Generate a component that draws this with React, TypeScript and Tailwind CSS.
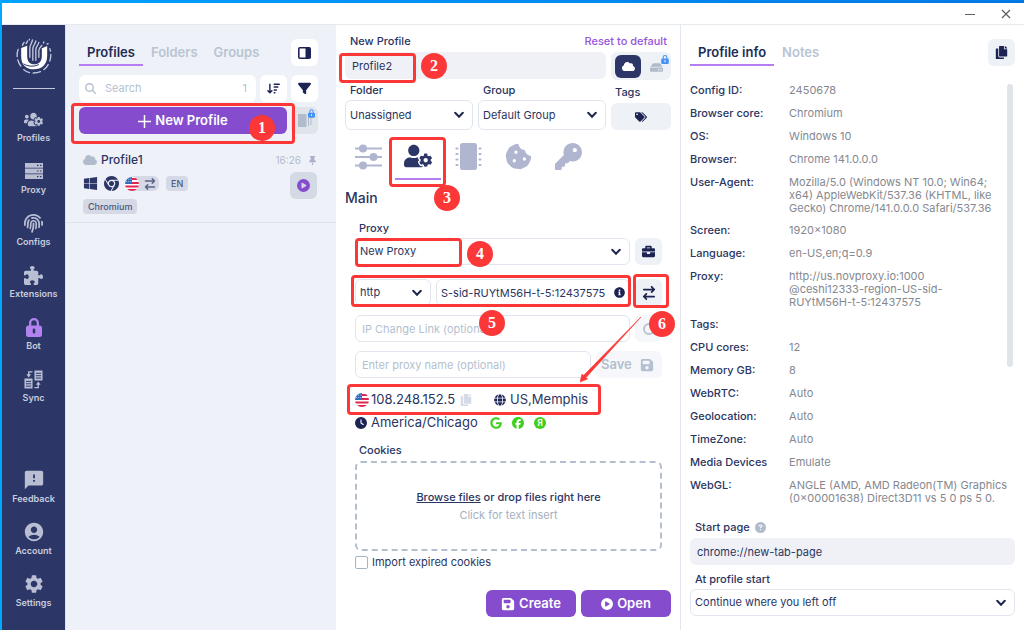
import { useState } from "react";
import type { ReactNode } from "react";
import { FaBriefcase, FaCopy, FaGlobe, FaHdd, FaInfoCircle, FaTags, FaUserCog, FaUsersCog } from "react-icons/fa";
import {
  FaArrowDownWideShort,
  FaArrowRightArrowLeft,
  FaChrome,
  FaCirclePlay,
  FaCircleQuestion,
  FaClock,
  FaCloud,
  FaCookieBite,
  FaFacebook,
  FaFilter,
  FaFingerprint,
  FaFloppyDisk,
  FaGoogle,
  FaKey,
  FaMagnifyingGlass,
  FaPuzzlePiece,
  FaThumbtack,
  FaWindows,
} from "react-icons/fa6";
import { MdAccountCircle, MdFeedback, MdSettings } from "react-icons/md";

const PROFILE_INFO = [
  ["Config ID:", "2450678"],
  ["Browser core:", "Chromium"],
  ["OS:", "Windows 10"],
  ["Browser:", "Chrome 141.0.0.0"],
  ["User-Agent:", "Mozilla/5.0 (Windows NT 10.0; Win64;\nx64) AppleWebKit/537.36 (KHTML, like\nGecko) Chrome/141.0.0.0 Safari/537.36"],
  ["Screen:", "1920×1080"],
  ["Language:", "en-US,en;q=0.9"],
  ["Proxy:", "http://us.novproxy.io:1000\n@ceshi12333-region-US-sid-\nRUYtM56H-t-5:12437575"],
  ["Tags:", ""],
  ["CPU cores:", "12"],
  ["Memory GB:", "8"],
  ["WebRTC:", "Auto"],
  ["Geolocation:", "Auto"],
  ["TimeZone:", "Auto"],
  ["Media Devices", "Emulate"],
  ["WebGL:", "ANGLE (AMD, AMD Radeon(TM) Graphics\n(0×00001638) Direct3D11 vs 5 0 ps 5 0."],
];

function Logo() {
  return (
    <svg viewBox="0 0 105 108" className="h-9 w-9" fill="none" stroke="#fff" strokeLinecap="round" aria-hidden="true">
      <path d="M14 30v24c0 27 15 40 38 40s40-14 40-40V24L76 31v23c0 16-8 25-23 25-14 0-21-9-21-25V23Z" fill="#fff" stroke="none" />
      <path d="M22 78c12 8 30 9 44 2" stroke="#2c3768" strokeWidth="3" />
      <g stroke="#c3c8dc" strokeWidth="4">
        <path d="M40 58V30c0-9 6-14 8-24M49 67V33c0-10 7-14 9-24M58 67V35c0-9 7-13 9-22M67 58V38c0-8 6-11 9-16" />
        <path d="M29 17c2-3 3-5 4-8M38 6l1-2M18 22c1-4 3-6 5-9M82 12l-1 3M92 18l3-1" />
        <path d="M5 34c-3 8-4 14-3 22M4 66c2 7 5 13 9 18M22 95c5 4 11 7 17 9M50 105c8 0 15-1 22-4M82 95c6-4 10-9 13-15M100 69c2-6 3-12 3-20M102 39l-2-7" />
      </g>
    </svg>
  );
}

function PadlockIcon({ className }: { className: string }) {
  return (
    <svg viewBox="0 0 16 19" className={className} fill="currentColor" aria-hidden="true">
      <path fillRule="evenodd" d="M3 7.500V5a5 5 0 0 1 10 0v2.500h.5A2.500 2.500 0 0 1 16 10v6.500A2.500 2.500 0 0 1 13.500 19h-11A2.500 2.500 0 0 1 0 16.500V10a2.500 2.500 0 0 1 2.500-2.500ZM5.300 7.500h5.400V5a2.700 2.700 0 0 0-5.400 0ZM8 10.500a1.300 1.300 0 0 0-1.300 1.300v2.400a1.300 1.300 0 0 0 2.600 0v-2.400A1.300 1.300 0 0 0 8 10.500Z" />
    </svg>
  );
}

function RackIcon({ className }: { className: string }) {
  return (
    <svg viewBox="0 0 20 18" className={className} aria-hidden="true">
      <path fill="currentColor" d="M1 1h18v4.800H1zM1 6.600h18v4.800H1zM1 12.200h18V17H1z" />
      <path stroke="#2c3768" strokeWidth="1.200" d="M13 3.400h1.500M16 3.400h1.500M13 9h1.500M16 9h1.500M13 14.600h1.500M16 14.600h1.500" />
    </svg>
  );
}

function SyncIcon({ className }: { className: string }) {
  return (
    <svg viewBox="0 0 20 20" className={className} aria-hidden="true">
      <path fill="currentColor" d="M11 .5h8.500V11H11zM.5 9H9v10.500H.5z" />
      <path stroke="#2c3768" strokeWidth="1" d="M12.500 3.500H18M12.500 6H18M12.500 8.500H18M2 12h5.500M2 14.500h5.500M2 17h5.500" />
      <path fill="none" stroke="currentColor" strokeWidth="1.400" d="M9 2H5v4M11 18.500h4V14" />
      <path fill="currentColor" d="M2.500 4.500h5L5 8zM12.500 15.500h5L15 12z" />
    </svg>
  );
}

function SlidersIcon() {
  return (
    <svg viewBox="0 0 27 27" className="size-[27px]" fill="currentColor" aria-hidden="true">
      <path d="M0 4.500h27v2H0zM0 13h27v2H0zM0 21.500h27v2H0z" />
      <circle cx="8" cy="5.500" r="4" />
      <circle cx="18.500" cy="14" r="4" />
      <circle cx="8" cy="22.500" r="4" />
    </svg>
  );
}

function ChipIcon() {
  return (
    <svg viewBox="0 0 27 27" className="size-[27px]" aria-hidden="true">
      <rect x="5" y="0" width="17" height="27" rx="2.500" fill="currentColor" />
      <path stroke="currentColor" strokeWidth="2.200" strokeLinecap="round" d="M1.500 5.500h1M1.500 11h1M1.500 16.500h1M1.500 22h1M24.500 5.500h1M24.500 11h1M24.500 16.500h1M24.500 22h1" />
    </svg>
  );
}

function FlagIcon() {
  return (
    <svg viewBox="0 0 14 14" className="size-[14px] shrink-0" role="img" aria-label="US">
      <clipPath id="flagClip">
        <circle cx="7" cy="7" r="7" />
      </clipPath>
      <g clipPath="url(#flagClip)">
        <path fill="#fff" d="M0 0h14v14H0z" />
        <path fill="#e0264f" d="M7 1h7v2H7zM7 5h7v2H7zM0 8.500h14v2H0zM0 12h14v2H0z" />
        <path fill="#2f6cc0" d="M0 0h7v7H0z" />
        <path stroke="#cfe0f5" strokeWidth=".8" strokeDasharray="1 1.200" d="M1 2.200h6M1 4.500h6" />
      </g>
    </svg>
  );
}

function YandexIcon() {
  return (
    <svg viewBox="0 0 14 14" className="size-3" aria-hidden="true">
      <circle cx="7" cy="7" r="7" fill="#3fd01f" />
      <text x="7" y="10.500" textAnchor="middle" fontSize="10" fontWeight="600" fontFamily="Inter, sans-serif" fill="#fff">Я</text>
    </svg>
  );
}

function Step({ n, className }: { n: number; className: string }) {
  return (
    <span className={`absolute z-20 flex size-[26px] items-center justify-center rounded-full bg-[#fb3737] font-['Liberation_Serif',serif] text-base leading-none font-bold text-white ${className}`}>
      {n}
    </span>
  );
}

function Frame({ className }: { className: string }) {
  return <span className={`pointer-events-none absolute z-10 rounded-sm border-[3px] border-[#fb3737] ${className}`} />;
}

function Select({ id, label, value, className = "" }: { id: string; label?: string; value: string; className?: string }) {
  return (
    <div className={`relative ${className}`}>
      <select id={id} aria-label={label} className="h-full w-full appearance-none rounded-md border border-[#e1e6ee] bg-white pl-1 text-[11px] text-[#2b355f] outline-none">
        <option>{value}</option>
      </select>
      <svg viewBox="0 0 10 7" className="pointer-events-none absolute top-1/2 right-[9px] h-[7px] w-[10px] -translate-y-1/2" fill="none" stroke="#1d2750" strokeWidth="2" strokeLinecap="round" aria-hidden="true">
        <path d="m1.200 1.200 3.800 4 3.800-4" />
      </svg>
    </div>
  );
}

function NavItem({ icon, label }: { icon: ReactNode; label: string }) {
  return (
    <button className="flex w-full flex-col items-center gap-[3px] text-[#b9bed3]">
      <span className="flex h-5 items-center">{icon}</span>
      <span className="text-[9px] leading-3 font-semibold text-[#c9cddd]">{label}</span>
    </button>
  );
}

function Sidebar() {
  return (
    <nav className="flex w-16 shrink-0 flex-col items-center border-r border-[#dfe3ec] bg-[#2c3768] pt-[13px] pb-[21px]">
      <Logo />
      <hr className="mt-[14px] w-[42px] border-[#c3c8dc]" />
      <div className="mt-5 flex w-full flex-col gap-[17px]">
        <NavItem icon={<FaUsersCog className="size-[19px]" />} label="Profiles" />
        <NavItem icon={<RackIcon className="size-5" />} label="Proxy" />
        <NavItem icon={<FaFingerprint className="size-[19px]" />} label="Configs" />
        <NavItem icon={<FaPuzzlePiece className="size-[19px]" />} label="Extensions" />
        <NavItem icon={<PadlockIcon className="h-[19px] w-4 text-[#b283ee]" />} label="Bot" />
        <NavItem icon={<SyncIcon className="size-[19px]" />} label="Sync" />
      </div>
      <div className="mt-auto flex w-full flex-col gap-[17px]">
        <NavItem icon={<MdFeedback className="size-[22px]" />} label="Feedback" />
        <NavItem icon={<MdAccountCircle className="size-[22px]" />} label="Account" />
        <NavItem icon={<MdSettings className="size-[22px]" />} label="Settings" />
      </div>
    </nav>
  );
}

function ProfileList() {
  const [tab, setTab] = useState("Profiles");
  return (
    <section className="w-[270px] shrink-0 bg-[#eef1f7]">
      <div className="flex flex-col gap-[5px] pr-[18px] pl-[13px]">
        <div className="mt-[14px] mb-1 flex h-[27px] items-center justify-between">
          <div className="flex h-full">
            {["Profiles", "Folders", "Groups"].map((t) => (
              <button
                key={t}
                onClick={() => setTab(t)}
                className={`border-b-2 px-2 pt-[3px] text-[13px] font-semibold ${t === tab ? "border-[#b57ff2] text-[#212b55]" : "border-transparent text-[#b9c4d3]"}`}
              >
                {t}
              </button>
            ))}
          </div>
          <button aria-label="Toggle panel" className="flex size-[27px] items-center justify-center rounded-md bg-white text-[#1d2454]">
            <svg viewBox="0 0 13 12" className="h-3 w-[13px]" aria-hidden="true">
              <rect x=".8" y=".8" width="11.400" height="10.400" rx="1" fill="none" stroke="currentColor" strokeWidth="1.600" />
              <path fill="currentColor" d="M7.500 1H12v10H7.500z" />
            </svg>
          </button>
        </div>
        <div className="flex gap-1">
          <label className="flex h-[27px] min-w-0 flex-1 items-center rounded-md bg-white px-[6px] text-[#b4bfcf]">
            <FaMagnifyingGlass className="size-[11px] shrink-0" />
            <input placeholder="Search" aria-label="Search" className="ml-[9px] min-w-0 flex-1 text-[11px] outline-none placeholder:text-[#b4bfcf]" />
            <span className="pr-[3px] text-[11px]">1</span>
          </label>
          <button aria-label="Sort" className="flex size-[27px] items-center justify-center rounded-md bg-white text-[#1d2454]">
            <FaArrowDownWideShort className="size-[13px]" />
          </button>
          <button aria-label="Filter" className="flex size-[27px] items-center justify-center rounded-md bg-white text-[#1d2454]">
            <FaFilter className="size-[13px]" />
          </button>
        </div>
        <div className="relative flex gap-1">
          <button className="flex h-[27px] flex-1 items-center justify-center gap-1 rounded-md bg-[#854dce] pt-px text-[13px] font-semibold text-white">
            <svg viewBox="0 0 14 14" className="size-[13px]" stroke="currentColor" strokeWidth="1.600" aria-hidden="true">
              <path d="M7 0v14M0 7h14" />
            </svg>
            New Profile
          </button>
          <button aria-label="Multiple profiles" className="relative flex size-[27px] items-center rounded-md bg-[#dfe4eb] pl-[7px] text-[#b0bccb]">
            <svg viewBox="0 0 14 13" className="h-[13px] w-[14px]" fill="currentColor" aria-hidden="true">
              <path d="M0 0h8.500v13H0zM10 1h1v11h-1zM12.500 2h1v9h-1z" />
            </svg>
            <PadlockIcon className="absolute top-[2px] right-[3px] h-[9px] w-[7px] text-[#4593f8]" />
          </button>
          <Frame className="-top-1 -left-2 h-[41px] w-[224px]" />
          <Step n={1} className="top-[8px] left-[170px]" />
        </div>
      </div>

      <article className="border-b border-[#dde2ea] pt-[18px] pr-[19px] pb-2 pl-[17px]">
        <div className="flex h-4 items-center gap-1 text-[#b0bccb]">
          <FaCloud className="size-[14px]" />
          <h2 className="flex-1 text-xs font-medium text-[#2b355f]">Profile1</h2>
          <span className="text-[10px]">16:26</span>
          <FaThumbtack className="ml-[3px] size-[9px] text-[#a9b0c8]" />
        </div>
        <div className="flex h-[31px] items-center text-[#2c3768]">
          <FaWindows className="size-[15px]" />
          <FaChrome className="ml-[6px] size-[15px]" />
          <span className="ml-[6px] flex h-[15px] items-center rounded-md bg-linear-to-r from-transparent from-20% to-[#d5d9e6] to-20% pr-[3px]">
            <FlagIcon />
            <FaArrowRightArrowLeft className="ml-[5px] size-3 text-[#5a6388]" />
          </span>
          <span className="ml-[7px] rounded bg-[#d5d9e6] px-[5px] text-[9px] leading-[15px] font-medium text-[#4c5679]">EN</span>
          <button aria-label="Start profile" className="mt-1 ml-auto flex size-[27px] items-center justify-center rounded-md bg-[#d3d9e5]">
            <FaCirclePlay className="size-[13px] text-[#854dce]" />
          </button>
        </div>
        <span className="block w-fit rounded bg-[#d5d9e6] px-[5px] text-[9px] leading-[15px] font-medium text-[#4c5679]">Chromium</span>
      </article>
    </section>
  );
}

const FORM_TABS = [
  { id: "general", icon: <SlidersIcon /> },
  { id: "account", icon: <FaUserCog className="size-[28px]" /> },
  { id: "hardware", icon: <ChipIcon /> },
  { id: "cookies", icon: <FaCookieBite className="size-[27px]" /> },
  { id: "passwords", icon: <FaKey className="size-[27px]" /> },
];

function ProfileForm() {
  const [tab, setTab] = useState("account");
  const field = "h-[27px] min-w-0 rounded-md border border-[#e1e6ee] bg-white text-[11px] text-[#2b355f] outline-none placeholder:text-[#b4bfcf]";
  return (
    <main className="flex min-w-0 flex-1 flex-col bg-white px-[9px] pt-2 pb-[13px] text-[11px] text-[#2b355f]">
      <div className="flex h-4 items-center justify-between pr-1 pl-[5px] font-medium">
        <label htmlFor="profileName">New Profile</label>
        <button className="text-[#9654dc]">Reset to default</button>
      </div>

      <div className="mt-[3px] flex gap-[5px]">
        <div className="relative flex-1">
          <input id="profileName" defaultValue="Profile2" className="h-[27px] w-full rounded-md bg-[#eff1f6] px-[7px] outline-none" />
          <Frame className="top-[1px] -left-[6px] h-[30px] w-[77px]" />
          <Step n={2} className="top-[1px] left-[76px]" />
        </div>
        <div className="flex h-[28px] w-[60px] items-center rounded-md bg-[#eef1f6] pl-1">
          <button aria-label="Cloud storage" className="flex h-[23px] w-[26px] items-center justify-center rounded-md bg-[#2c3768] text-white">
            <FaCloud className="size-[13px]" />
          </button>
          <button aria-label="Local storage" className="relative ml-[9px] h-full w-5 text-[#b0bccb]">
            <FaHdd className="mt-[2px] size-[13px]" />
            <PadlockIcon className="absolute top-[3px] right-[1px] h-[9px] w-[8px] text-[#4593f8]" />
          </button>
        </div>
      </div>

      <div className="mt-[3px] flex gap-[5px]">
        <div className="grid flex-1 grid-cols-2 gap-[5px]">
          <div>
            <label htmlFor="folder" className="block pl-[5px] leading-[14px] font-medium">Folder</label>
            <Select id="folder" value="Unassigned" className="mt-[3px] h-[30px]" />
          </div>
          <div>
            <label htmlFor="group" className="block pl-[5px] leading-[14px] font-medium">Group</label>
            <Select id="group" value="Default Group" className="mt-[3px] h-[30px]" />
          </div>
        </div>
        <div className="flex w-[60px] flex-col justify-end gap-1">
          <span className="pl-1 leading-[14px] font-medium">Tags</span>
          <button aria-label="Edit tags" className="flex h-[27px] items-center justify-center rounded-md bg-[#eef1f5] text-[#1d2454]">
            <FaTags className="size-3" />
          </button>
        </div>
      </div>

      <div className="mt-2 flex gap-1">
        {FORM_TABS.map((t) => (
          <button
            key={t.id}
            aria-label={t.id}
            onClick={() => setTab(t.id)}
            className={`relative flex h-[42px] w-[46px] items-center justify-center border-b-2 pb-1 ${t.id === tab ? "border-[#b57ff2] text-[#2c3768]" : "border-transparent text-[#b0b6cf]"}`}
          >
            {t.icon}
            {t.id === "account" && (
              <>
                <Frame className="-top-[1px] -left-[6px] h-[50px] w-[57px]" />
                <Step n={3} className="top-[47px] left-[39px]" />
              </>
            )}
          </button>
        ))}
      </div>

      <h1 className="mt-2 text-[14px] leading-5 font-medium">Main</h1>

      <div className="mt-[13px] pr-[9px] pl-[10px]">
        <label htmlFor="proxy" className="block pl-1 leading-[14px] font-medium">Proxy</label>
        <div className="relative mt-[3px] flex gap-[5px]">
          <Select id="proxy" value="New Proxy" className="h-[27px] flex-1" />
          <button aria-label="Proxy manager" className="flex size-[27px] items-center justify-center rounded-md bg-[#eef1f5] text-[#1d2454]">
            <FaBriefcase className="size-[13px]" />
          </button>
          <Frame className="top-0 left-0 h-[29px] w-[107px]" />
          <Step n={4} className="top-[3px] left-[112px]" />
        </div>

        <div className="relative mt-[14px] flex gap-[5px]">
          <Select id="proxyType" label="Proxy type" value="http" className="h-[27px] w-[76px]" />
          <div className="relative min-w-0 flex-1">
            <input aria-label="Proxy address" defaultValue="S-sid-RUYtM56H-t-5:12437575" className={`${field} w-full pr-4 pl-1`} />
            <FaInfoCircle className="absolute top-2 right-[5px] size-[11px] text-[#1d2454]" />
          </div>
          <button aria-label="Check proxy" className="relative flex size-[27px] items-center justify-center rounded-md bg-[#eef1f5] text-[#1d2454]">
            <FaArrowRightArrowLeft className="size-[14px]" />
            <Frame className="-top-[5px] -left-[2px] h-[34px] w-[36px]" />
            <Step n={6} className="top-[32px] left-[14px]" />
            <svg viewBox="0 0 62 66" className="absolute top-[38px] -left-[55px] z-10 h-[66px] w-[62px] max-w-none" fill="#fb3737" aria-hidden="true">
              <path d="M61 0 6 60.500l1.500 1.500L0 65l2-8 1.500 1.500Z" stroke="#fb3737" strokeWidth=".6" />
            </svg>
          </button>
          <Frame className="-top-1 -left-1 h-[32px] w-[280px]" />
          <Step n={5} className="top-[31px] left-[124px]" />
        </div>

        <div className="mt-[9px] flex gap-[5px]">
          <input aria-label="IP change link" placeholder="IP Change Link (optional)" className={`${field} flex-1 pl-[6px]`} />
          <button aria-label="Change IP" className="flex size-[27px] items-center justify-center rounded-md bg-[#f5f7fa]">
            <span className="size-3 rounded-full border-2 border-[#b9c4d3]" />
          </button>
        </div>

        <div className="mt-[9px] flex gap-[5px]">
          <input aria-label="Proxy name" placeholder="Enter proxy name (optional)" className={`${field} flex-1 pl-[6px]`} />
          <button className="flex h-[27px] w-[66px] items-center gap-2 rounded-md bg-[#f5f7fa] pl-[5px] text-[13px] font-semibold text-[#b4bfcf]">
            Save
            <FaFloppyDisk className="size-[14px]" />
          </button>
        </div>

        <div className="relative mt-3 flex h-5 items-center text-[13px]">
          <FlagIcon />
          <span className="ml-[2px]">108.248.152.5</span>
          <button aria-label="Copy IP" className="ml-[5px] text-[#d5dbe6]">
            <FaCopy className="size-3" />
          </button>
          <FaGlobe className="ml-[22px] size-3 text-[#1d2454]" />
          <span className="ml-1">US,Memphis</span>
          <Frame className="-top-[6px] -left-2 h-[31px] w-[254px]" />
        </div>
        <div className="mt-[3px] flex h-5 items-center text-[13px]">
          <FaClock className="size-3 text-[#1d2454]" />
          <span className="ml-1">America/Chicago</span>
          <span className="ml-3 flex gap-[10px] text-[#3fd01f]">
            <FaGoogle className="size-3" />
            <FaFacebook className="size-3" />
            <YandexIcon />
          </span>
        </div>

        <h2 className="mt-[10px] pl-1 leading-[14px] font-medium">Cookies</h2>
        <div className="mt-1 flex h-[90px] flex-col items-center justify-center gap-1 rounded-md border-2 border-dashed border-[#b3bfce] leading-[14px]">
          <p className="font-medium">
            <a href="#cookies" className="underline">Browse files</a> or drop files right here
          </p>
          <button className="text-[#a5b0c0]">Click for text insert</button>
        </div>
        <label className="mt-1 flex h-[14px] items-center gap-1">
          <input type="checkbox" className="size-[13px] appearance-none rounded-xs border border-[#a5b3c4] bg-white" />
          Import expired cookies
        </label>
      </div>

      <div className="mt-auto flex justify-end gap-[5px]">
        <button className="flex h-[27px] w-[90px] items-center justify-center gap-1 rounded-md bg-[#854dce] pt-px text-[13px] font-semibold text-white">
          <FaFloppyDisk className="size-[14px]" />
          Create
        </button>
        <button className="flex h-[27px] w-[90px] items-center justify-center gap-1 rounded-md bg-[#854dce] pt-px text-[13px] font-semibold text-white">
          <FaCirclePlay className="size-3" />
          Open
        </button>
      </div>
    </main>
  );
}

function ProfileInfo() {
  return (
    <aside className="flex w-[344px] shrink-0 flex-col border-l border-[#e3e7ef] bg-white pr-[9px] pb-[14px] pl-[9px] text-[11px] text-[#2b355f]">
      <div className="mt-[14px] flex h-[27px] shrink-0 justify-between">
        <div className="flex text-[13px] font-semibold">
          <button className="border-b-2 border-[#b57ff2] px-2 pt-[3px] text-[#212b55]">Profile info</button>
          <button className="border-b-2 border-transparent px-2 pt-[3px] text-[#b9c4d3]">Notes</button>
        </div>
        <button aria-label="Copy info" className="flex size-[27px] items-center justify-center rounded-md bg-[#eef1f5] text-[#1d2454]">
          <FaCopy className="size-[13px]" />
        </button>
      </div>

      <div className="mt-[18px] flex min-h-0 flex-1 overflow-hidden">
        <table className="h-fit min-w-0 flex-1 table-fixed text-left leading-[13px]">
          <tbody>
            {PROFILE_INFO.map(([name, value]) => (
              <tr key={name} className="align-top">
                <th scope="row" className="w-[101px] pb-[10px] font-medium last:pb-0">{name}</th>
                <td className="pb-[9px] whitespace-pre text-[#85888f]">{value}</td>
              </tr>
            ))}
          </tbody>
        </table>
        <div className="mr-[2px] h-[283px] w-[6px] shrink-0 rounded-full bg-[#e0e4e9]" />
      </div>

      <div className="mt-[14px] flex shrink-0 items-center gap-[5px] pl-[5px] leading-[14px] font-medium">
        <label htmlFor="startPage">Start page</label>
        <FaCircleQuestion className="size-[11px] text-[#b0bccb]" />
      </div>
      <input id="startPage" defaultValue="chrome://new-tab-page" className="mt-1 h-[27px] shrink-0 rounded-md bg-[#eff1f6] px-[7px] outline-none" />
      <label htmlFor="profileStart" className="mt-[7px] block shrink-0 pl-[5px] leading-[14px] font-medium">At profile start</label>
      <Select id="profileStart" value="Continue where you left off" className="mt-[3px] h-[27px] shrink-0" />
    </aside>
  );
}

export default function App() {
  return (
    <div className="flex h-screen flex-col overflow-hidden border-l-2 border-[#00a8ff] bg-white font-[Inter,sans-serif]">
      <div className="-ml-[2px] h-[3px] shrink-0 bg-linear-to-r from-[#00a2ff] to-[#0078e4]" />
      <header className="flex h-[22px] shrink-0 items-center justify-end gap-[26px] border-b border-[#e6eaef] pr-[13px] text-[#5f5f5f]">
        <button aria-label="Minimize">
          <svg viewBox="0 0 10 10" className="size-[10px]" stroke="currentColor" aria-hidden="true">
            <path d="M0 5.500h10" />
          </svg>
        </button>
        <button aria-label="Close">
          <svg viewBox="0 0 10 10" className="size-[10px]" stroke="currentColor" strokeWidth="1.200" aria-hidden="true">
            <path d="m1 1 8 8M9 1 1 9" />
          </svg>
        </button>
      </header>
      <div className="flex min-h-0 flex-1">
        <Sidebar />
        <ProfileList />
        <ProfileForm />
        <ProfileInfo />
      </div>
    </div>
  );
}
